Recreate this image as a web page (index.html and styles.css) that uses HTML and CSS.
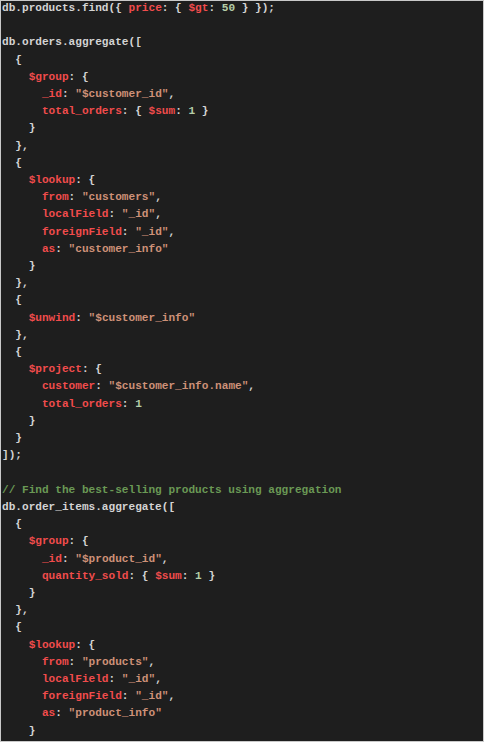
FILE: index.html
```html
<!DOCTYPE html>
<html>
<head>
<meta charset="utf-8">
<link rel="stylesheet" href="styles.css">
</head>
<body>
<div class="code-box">
<pre class="code">db.products.find({ <span class="k">price</span>: { <span class="k">$gt</span>: <span class="n">50</span> } });

db.orders.aggregate([
  {
    <span class="k">$group</span>: {
      <span class="k">_id</span>: <span class="s">"$customer_id"</span>,
      <span class="k">total_orders</span>: { <span class="k">$sum</span>: <span class="n">1</span> }
    }
  },
  {
    <span class="k">$lookup</span>: {
      <span class="k">from</span>: <span class="s">"customers"</span>,
      <span class="k">localField</span>: <span class="s">"_id"</span>,
      <span class="k">foreignField</span>: <span class="s">"_id"</span>,
      <span class="k">as</span>: <span class="s">"customer_info"</span>
    }
  },
  {
    <span class="k">$unwind</span>: <span class="s">"$customer_info"</span>
  },
  {
    <span class="k">$project</span>: {
      <span class="k">customer</span>: <span class="s">"$customer_info.name"</span>,
      <span class="k">total_orders</span>: <span class="n">1</span>
    }
  }
]);

<span class="c">// Find the best-selling products using aggregation</span>
db.order_items.aggregate([
  {
    <span class="k">$group</span>: {
      <span class="k">_id</span>: <span class="s">"$product_id"</span>,
      <span class="k">quantity_sold</span>: { <span class="k">$sum</span>: <span class="n">1</span> }
    }
  },
  {
    <span class="k">$lookup</span>: {
      <span class="k">from</span>: <span class="s">"products"</span>,
      <span class="k">localField</span>: <span class="s">"_id"</span>,
      <span class="k">foreignField</span>: <span class="s">"_id"</span>,
      <span class="k">as</span>: <span class="s">"product_info"</span>
    }
  }
]);</pre>
</div>
</body>
</html>
```
FILE: styles.css
```css
html, body {
  margin: 0;
  padding: 0;
  background: #ffffff;
}
.code-box {
  width: 484px;
  height: 742px;
  box-sizing: border-box;
  border: 1px solid #c9c9c9;
  background: #1e1e1e;
  overflow: hidden;
}
.code {
  margin: -1px 0 0 0;
  padding: 0 0 0 1px;
  font-family: "Liberation Mono", "Courier New", monospace;
  font-weight: bold;
  font-size: 11.1px;
  line-height: 17.2px;
  color: #d4d4d4;
  white-space: pre;
}
.k { color: #f14c4c; }
.s { color: #ce9178; }
.n { color: #b5cea8; }
.c { color: #6a9955; }
```
